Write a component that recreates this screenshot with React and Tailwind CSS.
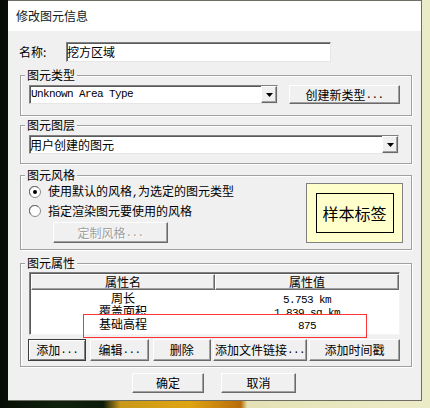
import React from "react";

const RAISED =
  "bg-[#f0f0f0] border border-t-white border-l-white border-r-[#6a6a6a] border-b-[#6a6a6a] shadow-[inset_-1px_-1px_0_#a0a0a0] flex items-center justify-center leading-[12px]";
const DEFAULT_BTN =
  "bg-[#f0f0f0] border border-[#3c3c3c] shadow-[inset_1px_1px_0_#fff,inset_-1px_-1px_0_#808080] flex items-center justify-center leading-[12px]";
const SUNKEN =
  "bg-white border border-t-[#808080] border-l-[#808080] border-r-[#e6e6e6] border-b-[#e6e6e6] shadow-[inset_1px_1px_0_#5a5a5a]";
const GROUP =
  "m-0 p-0 min-w-0 border border-[#a0a0a0] shadow-[1px_1px_0_#fff,inset_1px_1px_0_#fff]";
const LEGEND = "ml-[4px] px-[2px] leading-[14px] bg-[#f0f0f0]";
const MONO = "[font-family:'Liberation_Mono',monospace] text-[11px] tracking-[-0.6px]";

function Dots() {
  return <span className={MONO}>...</span>;
}

function Arrow() {
  return (
    <div className={RAISED + " w-[16px] h-full"}>
      <svg width="7" height="4" viewBox="0 0 7 4">
        <polygon points="0,0 7,0 3.5,4" fill="#000" />
      </svg>
    </div>
  );
}

function Radio({ checked }) {
  return (
    <svg width="12" height="12" viewBox="0 0 12 12" className="shrink-0">
      <circle cx="6" cy="6" r="5.5" fill="#fff" stroke="#8a8a8a" />
      <path d="M1.8 9.2 A4.6 4.6 0 0 1 9.2 1.8" fill="none" stroke="#6a6a6a" strokeWidth="1" />
      {checked && <circle cx="6" cy="6" r="2" fill="#000" />}
    </svg>
  );
}

export default function App() {
  return (
    <div className="w-[430px] h-[408px] overflow-hidden flex items-start bg-[linear-gradient(90deg,#070d06_0%,#10220c_14%,#0c1a0a_24%,#c89818_28%,#e0a412_44%,#b86c0a_56%,#e4e2b4_57.5%,#ecebc8_100%)] [font-family:'Noto_Sans_CJK_SC',sans-serif] text-[12px] text-black">
      <div className="ml-[8px] w-[414px] h-[401px] bg-[#f0f0f0] border-t border-r border-b border-[#6e6e66] flex flex-col">
        {/* title bar */}
        <div className="h-[30px] bg-white flex items-center pl-[8px] leading-[12px] text-[#101820]">
          修改图元信息
        </div>

        <div className="flex flex-col pl-[12px] pr-[9px]">
          {/* name row */}
          <div className="mt-[11px] h-[20px] flex items-center">
            <div className="w-[47px] -ml-[1px] leading-[12px]">名称:</div>
            <div className={SUNKEN + " w-[265px] h-[20px] flex items-center leading-[12px]"}>
              挖方区域
            </div>
          </div>

          {/* group 1 */}
          <fieldset className={GROUP + " mt-[6px]"}>
            <legend className={LEGEND}>图元类型</legend>
            <div className="flex items-start gap-[11px] pl-[8px] pr-[11px] pt-[3px] pb-[11px]">
              <div className={SUNKEN + " w-[249px] h-[19px] flex"}>
                <div className="flex-1 flex items-center pl-[1px]">
                  <span className={MONO}>Unknown Area Type</span>
                </div>
                <Arrow />
              </div>
              <div className={RAISED + " w-[111px] h-[19px]"}>
                创建新类型<Dots />
              </div>
            </div>
          </fieldset>

          {/* group 2 */}
          <fieldset className={GROUP + " mt-[2px]"}>
            <legend className={LEGEND}>图元图层</legend>
            <div className="flex pl-[8px] pr-[12px] pt-[3px] pb-[9px]">
              <div className={SUNKEN + " w-full h-[19px] flex"}>
                <div className="flex-1 flex items-center leading-[12px]">用户创建的图元</div>
                <Arrow />
              </div>
            </div>
          </fieldset>

          {/* group 3 */}
          <fieldset className={GROUP + " mt-[4px]"}>
            <legend className={LEGEND}>图元风格</legend>
            <div className="flex justify-between items-start pl-[8px] pr-[8px] pt-[1px] pb-[6px]">
              <div className="flex flex-col pt-[1px] gap-[3px]">
                <div className="h-[16px] flex items-center gap-[7px] leading-[12px]">
                  <Radio checked />
                  <span>使用默认的风格<span className={MONO}>,</span>为选定的图元类型</span>
                </div>
                <div className="h-[16px] flex items-center gap-[7px] leading-[12px]">
                  <Radio />
                  <span>指定渲染图元要使用的风格</span>
                </div>
                <div className={RAISED + " ml-[24px] w-[115px] h-[21px] text-[#a0a0a0] [text-shadow:1px_1px_0_#fff]"}>
                  定制风格<Dots />
                </div>
              </div>
              <div className="w-[97px] h-[60px] bg-[#ffffcc] border border-[#808080] flex items-center justify-center">
                <div className="w-[78px] h-[40px] border border-black flex items-center justify-center text-[16px] leading-[16px]">
                  样本标签
                </div>
              </div>
            </div>
          </fieldset>

          {/* group 4 */}
          <fieldset className={GROUP + " mt-[6px]"}>
            <legend className={LEGEND}>图元属性</legend>
            <div className="flex flex-col pl-[8px] pr-[11px] pt-[2px] pb-[5px]">
              <div className="relative w-full h-[63px] bg-white border border-t-[#808080] border-l-[#808080] border-r-[#f4f4f4] border-b-[#f4f4f4] shadow-[inset_1px_1px_0_#5a5a5a] pt-[1px] pl-[1px]">
                <div className="flex h-[16px]">
                  <div className={RAISED + " w-[184px] h-[16px]"}>属性名</div>
                  <div className={RAISED + " flex-1 h-[16px]"}>属性值</div>
                </div>
                <div className="flex h-[14px] pt-[2px] leading-[12px]">
                  <div className="w-[184px] text-center">周长</div>
                  <div className="flex-1 text-center"><span className={MONO}>5.753 km</span></div>
                </div>
                <div className="relative flex h-[10px] overflow-hidden pt-[1px] leading-[12px]">
                  <div className="w-[184px] text-center">覆盖面积</div>
                  <div className="flex-1 text-center"><span className={MONO}>1.839 sq km</span></div>
                </div>
                <div className="flex h-[17px] pt-[4px] leading-[12px]">
                  <div className="w-[184px] text-center">基础高程</div>
                  <div className="flex-1 text-center"><span className={MONO}>875</span></div>
                </div>
                <div className="absolute left-[53px] top-[41px] w-[284px] h-[24px] border border-[#ff3333]" />
              </div>
              <div className="flex mt-[4px] -ml-[1px]">
                <div className={DEFAULT_BTN + " w-[59px] h-[22px]"}>添加<Dots /></div>
                <div className={RAISED + " ml-[4px] w-[59px] h-[22px]"}>编辑<Dots /></div>
                <div className={RAISED + " ml-[4px] w-[59px] h-[22px]"}>删除</div>
                <div className={RAISED + " ml-[2px] w-[94px] h-[22px] shrink-0"}>添加文件链接<Dots /></div>
                <div className={RAISED + " ml-[2px] w-[91px] h-[22px] shrink-0"}>添加时间戳</div>
              </div>
            </div>
          </fieldset>

          {/* bottom buttons */}
          <div className="flex mt-[6px]">
            <div className={RAISED + " ml-[112px] w-[72px] h-[20px]"}>确定</div>
            <div className={RAISED + " ml-[17px] w-[75px] h-[20px]"}>取消</div>
          </div>
        </div>
      </div>
    </div>
  );
}
